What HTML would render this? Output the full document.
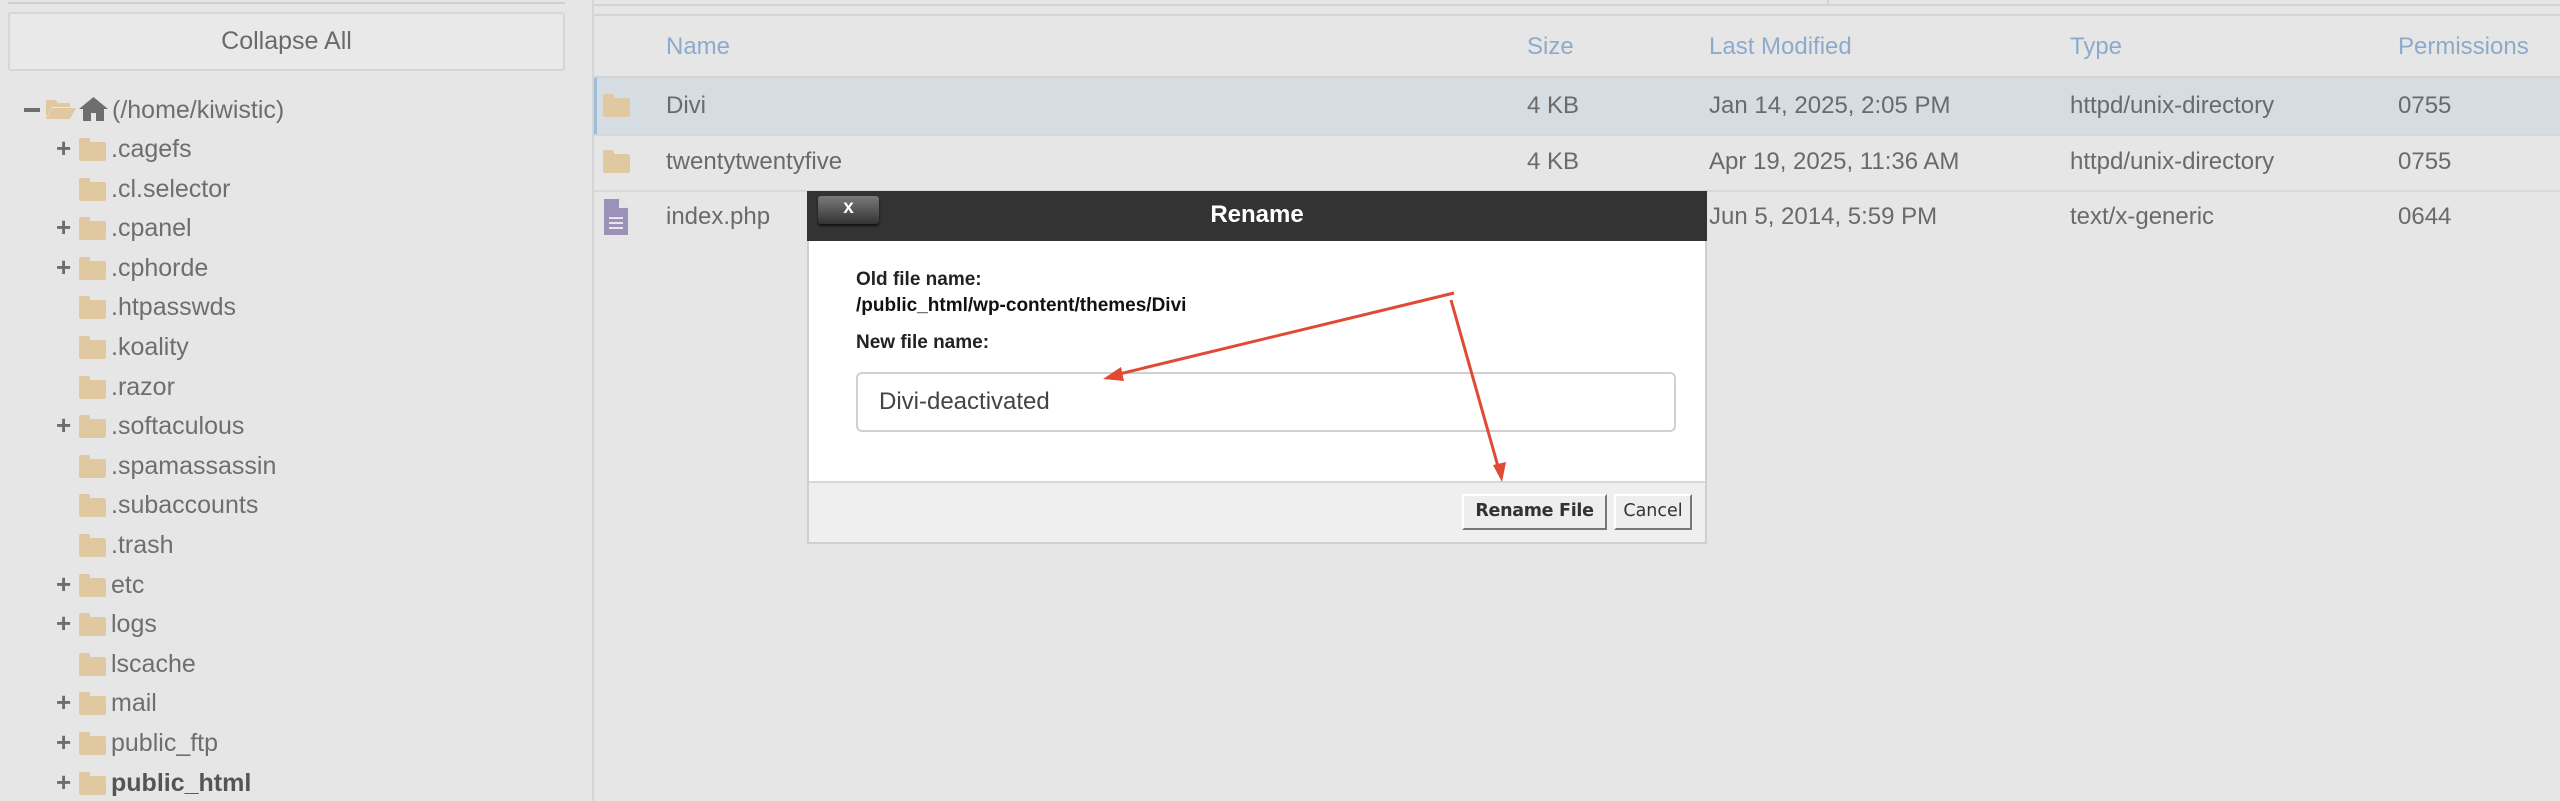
<!DOCTYPE html>
<html><head><meta charset="utf-8"><style>
*{margin:0;padding:0;box-sizing:border-box}
body{width:2560px;height:801px;background:#e6e6e6;position:relative;overflow:hidden;font-family:"Liberation Sans",Arial,sans-serif;color:#6a6a6a}
.a{position:absolute;white-space:nowrap}
.tree{font-size:25px;color:#6e6e6e;line-height:30px}
.fold{position:absolute;width:27px;height:22px}
.fold:before{content:"";position:absolute;left:0;top:0;width:11px;height:5px;background:#e0c9a0;border-radius:2px 2px 0 0}
.fold:after{content:"";position:absolute;left:0;top:4px;width:27px;height:19px;background:#e0c9a0;border-radius:1px 2px 2px 2px}
.plus{position:absolute;font-size:26px;font-weight:bold;color:#6e6e6e}
.hd{font-size:24px;color:#8eaaca}
.td{font-size:24px;color:#6a6a6a}
</style></head><body>
<div class="a" style="left:8px;top:0;width:557px;height:4px;border-bottom:2px solid #d0d0d0"></div>
<div class="a" style="left:8px;top:12px;width:557px;height:59px;border:2px solid #d6d6d6;border-radius:3px;background:#e9e9e9;font-size:25px;color:#6a6a6a;text-align:center;line-height:55px">Collapse All</div>
<div class="a" style="left:592px;top:0;width:2px;height:801px;background:#d6d6d6"></div>

<div class="tree">
<div class="a" style="left:24px;width:16px;height:4px;background:#6e6e6e;top:108px"></div>
<svg class="a" style="left:46px;top:98px" width="30" height="22" viewBox="0 0 30 22"><path d="M0 2h10l2 3h12v4H6L0 20z" fill="#e0c9a0"/><path d="M6 10h24l-6 11H0z" fill="#e0c9a0"/></svg>
<svg class="a" style="left:79px;top:96px" width="29" height="26" viewBox="0 0 29 26"><path d="M14.5 1L0 13h4v12h8v-8h5v8h8V13h4z" fill="#6e6e6e"/></svg>
<div class="a" style="left:112px;top:95px">(/home/kiwistic)</div>
</div>

<div class="tree" id="t"></div>

<div class="a" style="left:594px;top:0;width:1966px;height:6px;border-bottom:2px solid #d4d4d4"></div>
<div class="a" style="left:1827px;top:0;width:2px;height:6px;background:#d4d4d4"></div>
<div class="a" style="left:594px;top:14px;width:1966px;height:2px;background:#d4d4d4"></div>
<div class="a" style="left:594px;top:76px;width:1966px;height:2px;background:#d4d4d4"></div>
<div class="a hd" style="left:666px;top:33px">Name</div>
<div class="a hd" style="left:1527px;top:33px">Size</div>
<div class="a hd" style="left:1709px;top:33px">Last Modified</div>
<div class="a hd" style="left:2070px;top:33px">Type</div>
<div class="a hd" style="left:2398px;top:33px">Permissions</div>

<div class="a" style="left:594px;top:78px;width:1966px;height:56px;background:#d5dce2;border-left:3px solid #9fbcd6"></div>
<div class="a" style="left:594px;top:134px;width:1966px;height:2px;background:#d8d8d8"></div>
<div class="a" style="left:594px;top:190px;width:1966px;height:2px;background:#d8d8d8"></div>
<div class="fold" style="left:603px;top:94px"></div>
<div class="a td" style="left:666px;top:92px">Divi</div>
<div class="a td" style="left:1527px;top:92px">4 KB</div>
<div class="a td" style="left:1709px;top:92px">Jan 14, 2025, 2:05 PM</div>
<div class="a td" style="left:2070px;top:92px">httpd/unix-directory</div>
<div class="a td" style="left:2398px;top:92px">0755</div>
<div class="fold" style="left:603px;top:150px"></div>
<div class="a td" style="left:666px;top:148px">twentytwentyfive</div>
<div class="a td" style="left:1527px;top:148px">4 KB</div>
<div class="a td" style="left:1709px;top:148px">Apr 19, 2025, 11:36 AM</div>
<div class="a td" style="left:2070px;top:148px">httpd/unix-directory</div>
<div class="a td" style="left:2398px;top:148px">0755</div>
<svg class="a" style="left:604px;top:199px" width="24" height="36" viewBox="0 0 24 36"><path d="M0 0h15l9 9v27H0z" fill="#9b91b9"/><path d="M15 0v9h9z" fill="#e6e6e6"/><path d="M5 19h14M5 24h14M5 29h14" stroke="#e6e6e6" stroke-width="2"/></svg>
<div class="a td" style="left:666px;top:203px">index.php</div>
<div class="a td" style="left:1709px;top:203px">Jun 5, 2014, 5:59 PM</div>
<div class="a td" style="left:2070px;top:203px">text/x-generic</div>
<div class="a td" style="left:2398px;top:203px">0644</div>

<div class="a" style="left:807px;top:191px;width:900px;height:353px;background:#fff;border:2px solid #cfcfcf;border-top:none"></div>
<div class="a" style="left:807px;top:191px;width:900px;height:50px;background:#333"></div>
<div class="a" style="left:818px;top:196px;width:61px;height:28px;background:linear-gradient(#7a7a7a,#333);border-radius:3px;box-shadow:0 2px 2px #111;color:#fff;font-weight:bold;font-size:19px;text-align:center;line-height:24px">x</div>
<div class="a" style="left:807px;top:201px;width:900px;text-align:center;color:#fff;font-weight:bold;font-size:24px">Rename</div>
<div class="a" style="left:809px;top:481px;width:896px;height:61px;background:#efefef;border-top:2px solid #d8d8d8"></div>
<div class="a" style="left:856px;top:269px;font-weight:bold;font-size:19px;color:#222">Old file name:</div>
<div class="a" style="left:856px;top:295px;font-weight:bold;font-size:19px;color:#111">/public_html/wp-content/themes/Divi</div>
<div class="a" style="left:856px;top:332px;font-weight:bold;font-size:19px;color:#222">New file name:</div>
<div class="a" style="left:856px;top:372px;width:820px;height:60px;border:2px solid #d0d0d0;border-radius:6px;background:#fff;font-size:24px;color:#444;padding-left:21px;line-height:56px">Divi-deactivated</div>
<div class="a" style="left:1462px;top:494px;width:145px;height:36px;background:#eee;border:2px solid;border-color:#fff #777 #777 #fff;font-family:'DejaVu Sans',sans-serif;font-weight:bold;font-size:17.5px;color:#333;text-align:center;line-height:31px;letter-spacing:-0.3px">Rename File</div>
<div class="a" style="left:1614px;top:494px;width:78px;height:36px;background:#eee;border:2px solid;border-color:#fff #777 #777 #fff;font-family:'DejaVu Sans',sans-serif;font-size:17.5px;color:#333;text-align:center;line-height:31px">Cancel</div>

<svg class="a" style="left:0;top:0" width="2560" height="801">
<g stroke="#e04a33" stroke-width="3" fill="#e04a33">
<line x1="1454" y1="293" x2="1115" y2="375"/>
<path d="M1103 379l18-12 3 14z" stroke="none"/>
<line x1="1451" y1="300" x2="1499" y2="470"/>
<path d="M1502 482l-9-17 13-3z" stroke="none"/>
</g></svg>

<script>
var items=[["+",".cagefs"],["",".cl.selector"],["+",".cpanel"],["+",".cphorde"],["",".htpasswds"],["",".koality"],["",".razor"],["+",".softaculous"],["",".spamassassin"],["",".subaccounts"],["",".trash"],["+","etc"],["+","logs"],["","lscache"],["+","mail"],["+","public_ftp"],["+","public_html"]];
var h="";
items.forEach(function(it,i){var c=150+i*39.6;
if(it[0])h+='<div class="plus a" style="left:56px;top:'+(c-17)+'px">+</div>';
h+='<div class="fold" style="left:79px;top:'+(c-12)+'px"></div>';
h+='<div class="a" style="left:111px;top:'+(c-16)+'px;'+(it[1]=="public_html"?"font-weight:bold;color:#555":"")+'">'+it[1]+'</div>';});
document.getElementById("t").innerHTML=h;
</script>
</body></html>
